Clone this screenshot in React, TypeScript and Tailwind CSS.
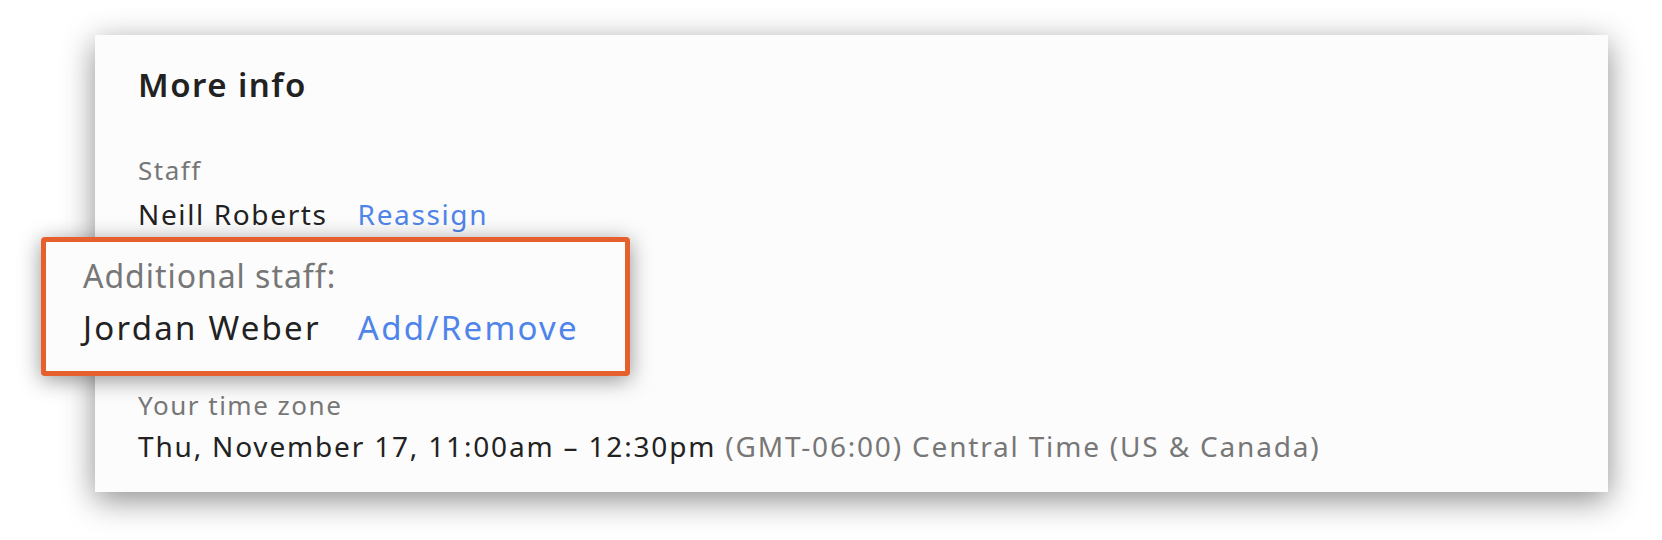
export default function App() {
    return (
        <div className="min-h-screen bg-white pt-[35px] pl-[95px] font-['Noto_Sans',sans-serif]">
            <div className="w-[1513px] h-[457px] bg-[#fcfcfc] shadow-[0_8px_30px_rgba(0,0,0,0.45)] pl-[43px] pt-[31px]">
                <h2 className="text-[33px] leading-[38px] font-semibold tracking-[0.045em] text-[#222]">
                    More info
                </h2>

                <div className="mt-[50px]">
                    <div className="text-[26px] leading-[32px] tracking-[0.058em] text-[#777]">Staff</div>
                    <div className="mt-[10px] flex gap-[30px] text-[28px] leading-[36px] tracking-[0.058em] text-[#222]">
                        <span>Neill Roberts</span>
                        <a className="text-[#4f84ea]">Reassign</a>
                    </div>
                </div>

                <div className="relative h-[157px]">
                    {/* highlighted, zoomed copy of the additional staff row */}
                    <div className="absolute left-[-97px] top-[5px] w-[589px] h-[139px] rounded-[4px] border-[5px] border-[#e6602e] bg-[#fcfcfc] shadow-[0_4px_22px_rgba(0,0,0,0.42)] pl-[37px] pt-[15px]">
                        <div className="text-[32px] leading-[38px] tracking-[0.03em] text-[#777]">
                            Additional staff:
                        </div>
                        <div className="mt-[14px] flex gap-[37px] text-[33px] leading-[38px] tracking-[0.068em] text-[#222]">
                            <span>Jordan Weber</span>
                            <a className="text-[#4f84ea]">Add/Remove</a>
                        </div>
                    </div>
                </div>

                <div>
                    <div className="text-[26px] leading-[32px] tracking-[0.058em] text-[#777]">Your time zone</div>
                    <div className="mt-[7px] text-[28px] leading-[36px] tracking-[0.065em] text-[#222]">
                        Thu, November 17, 11:00am – 12:30pm{' '}
                        <span className="text-[#777]">(GMT-06:00) Central Time (US &amp; Canada)</span>
                    </div>
                </div>
            </div>
        </div>
    )
}
